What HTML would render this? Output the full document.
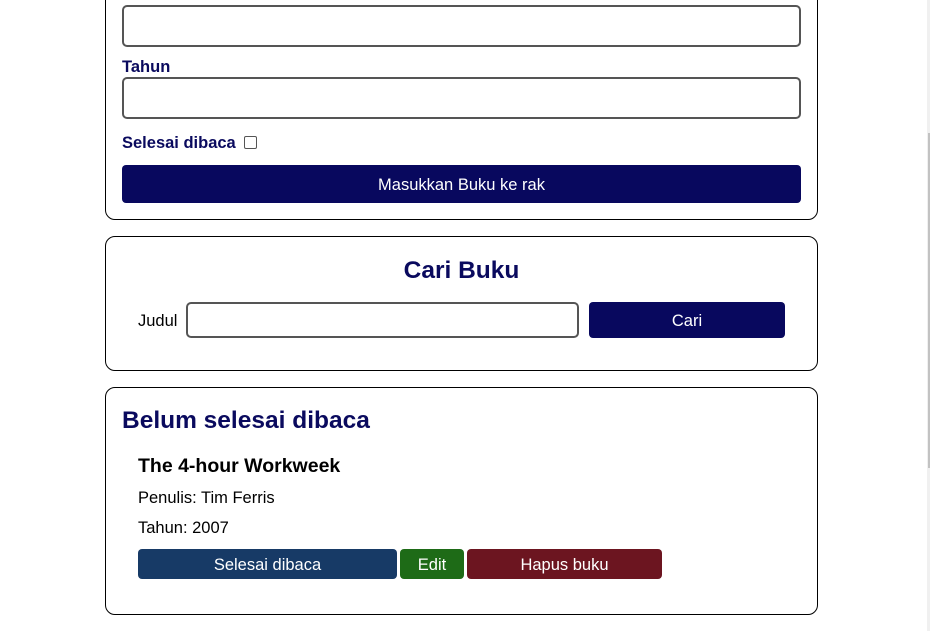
<!DOCTYPE html>
<html><head><meta charset="utf-8"><style>
*{box-sizing:border-box;margin:0;padding:0}
body{width:930px;height:631px;overflow:hidden;background:#fff;font-family:"Liberation Sans",sans-serif;position:relative}
.a{position:absolute}
.box{position:absolute;left:105px;width:713px;border:1px solid #000;border-radius:10px}
.inp{position:absolute;border:2px solid #555;border-radius:5px;background:#fff}
.btn{position:absolute;color:#fff;text-align:center;border-radius:4px;font-size:16.5px}
.lbl{position:absolute;color:#0a0a5e;font-weight:bold;font-size:16.5px}
</style></head><body>
<div class="box" style="top:-20px;height:240px"></div>
<div class="inp" style="left:122px;top:5px;width:679px;height:42px"></div>
<div class="lbl" style="left:122px;top:58px">Tahun</div>
<div class="inp" style="left:122px;top:77px;width:679px;height:42px"></div>
<div class="lbl" style="left:122px;top:134px">Selesai dibaca</div>
<div class="a" style="left:244px;top:136px;width:13px;height:13px;border:1px solid #555;border-radius:2px"></div>
<div class="btn" style="left:122px;top:165px;width:679px;height:38px;line-height:40px;background:#08085e">Masukkan Buku ke rak</div>

<div class="box" style="top:236px;height:135px"></div>
<div class="a" style="left:105px;width:713px;top:257px;text-align:center;color:#0a0a5e;font-weight:bold;font-size:24.5px">Cari Buku</div>
<div class="a" style="left:138px;top:312px;font-size:16.5px;color:#000">Judul</div>
<div class="inp" style="left:186px;top:302px;width:393px;height:36px"></div>
<div class="btn" style="left:589px;top:302px;width:196px;height:36px;line-height:38px;background:#08085e">Cari</div>

<div class="box" style="top:387px;height:228px"></div>
<div class="a" style="left:122px;top:407px;color:#0a0a5e;font-weight:bold;font-size:24.5px">Belum selesai dibaca</div>
<div class="a" style="left:138px;top:455px;font-weight:bold;font-size:19.5px;color:#000">The 4-hour Workweek</div>
<div class="a" style="left:138px;top:489px;font-size:16.5px">Penulis: Tim Ferris</div>
<div class="a" style="left:138px;top:519px;font-size:16.5px">Tahun: 2007</div>
<div class="btn" style="left:138px;top:549px;width:259px;height:30px;line-height:32px;background:#173a66">Selesai dibaca</div>
<div class="btn" style="left:400px;top:549px;width:64px;height:30px;line-height:32px;background:#1e6b17">Edit</div>
<div class="btn" style="left:467px;top:549px;width:195px;height:30px;line-height:32px;background:#6c1520">Hapus buku</div>

<div class="a" style="left:927px;top:0;width:3px;height:631px;background:#f0f0f0"></div>
<div class="a" style="left:928px;top:133px;width:2px;height:335px;background:#c2c2c2"></div>
</body></html>
